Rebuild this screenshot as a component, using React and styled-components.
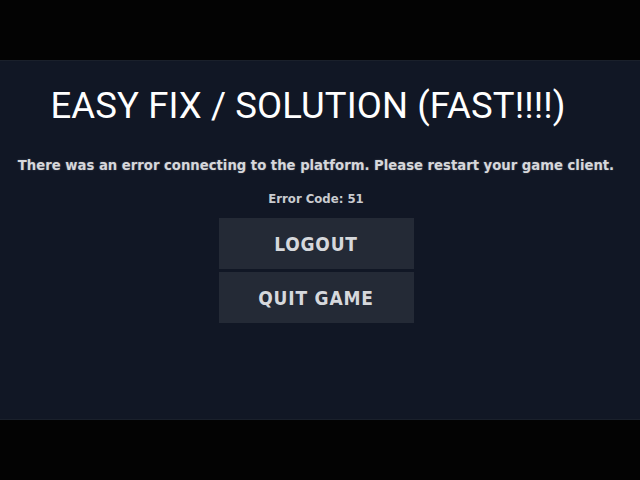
import React from 'react'
import styled, { createGlobalStyle } from 'styled-components'

const GlobalStyle = createGlobalStyle`
  html, body {
    margin: 0;
    padding: 0;
    background: #030303;
  }
`

function App() {
  return (
    <>
      <GlobalStyle />
      <Frame>
        <LetterBox />
        <Screen>
          <Title>EASY FIX / SOLUTION (FAST!!!!)</Title>
          <Message>There was an error connecting to the platform. Please restart your game client.</Message>
          <ErrorCode>Error Code: 51</ErrorCode>
          <Actions>
            <MenuButton>LOGOUT</MenuButton>
            <MenuButton>QUIT GAME</MenuButton>
          </Actions>
        </Screen>
        <LetterBox />
      </Frame>
    </>
  )
}

const Frame = styled.div`
  width: 640px;
  height: 480px;
  display: flex;
  flex-direction: column;
  overflow: hidden;
`
const LetterBox = styled.div`
  height: 60px;
  flex-shrink: 0;
  background-color: #030303;
`
const Screen = styled.div`
  flex: 1;
  display: flex;
  flex-direction: column;
  align-items: center;
  padding-top: 24px;
  padding-right: 8px;
  background-color: #111725;
  border-top: 1px solid #1a202b;
  border-bottom: 1px solid #1a202b;
  box-sizing: border-box;
`
const Title = styled.h1`
  margin: 0 16px 0 0;
  font-family: Roboto, "Liberation Sans", sans-serif;
  font-weight: 400;
  font-size: 36.5px;
  letter-spacing: 0.1px;
  line-height: 42px;
  color: #ffffff;
  white-space: nowrap;
`
const Message = styled.p`
  margin: 28px 0 0;
  font-family: "DejaVu Sans Condensed", "DejaVu Sans", sans-serif;
  font-weight: 700;
  font-size: 14.7px;
  line-height: 20px;
  color: #d6d7db;
  white-space: nowrap;
  text-shadow: 0 0 2px rgba(255, 255, 255, 0.25);
`
const ErrorCode = styled.div`
  margin-top: 16px;
  font-family: "DejaVu Sans Condensed", "DejaVu Sans", sans-serif;
  font-weight: 700;
  font-size: 13px;
  line-height: 16px;
  color: #c9cbd0;
`
const Actions = styled.div`
  margin-top: 11px;
  display: flex;
  flex-direction: column;
  gap: 3px;
`
const MenuButton = styled.button`
  width: 195px;
  height: 51px;
  border: none;
  padding: 0;
  background-color: #242a36;
  font-family: "DejaVu Sans Condensed", "DejaVu Sans", sans-serif;
  font-weight: 700;
  font-size: 19px;
  letter-spacing: 0.8px;
  color: #d6d8dc;
`

export default App
